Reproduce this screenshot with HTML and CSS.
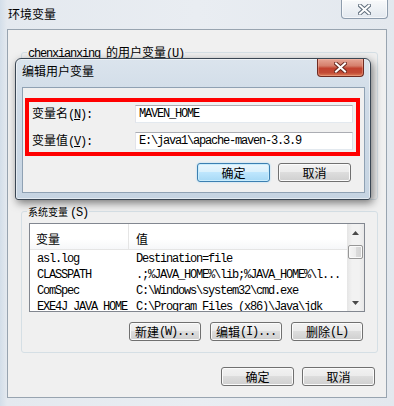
FILE: index.html
```html
<!DOCTYPE html>
<html lang="zh-CN">
<head>
<meta charset="utf-8">
<title>环境变量</title>
<link rel="stylesheet" href="styles.css">
</head>
<body>
<div class="win">
  <div class="win-title">
    <span class="win-caption">环境变量</span>
    <div class="win-close">
      <svg width="13" height="11" viewBox="0 0 13 11"><path d="M2 1.5 L11 9.5 M11 1.5 L2 9.5" stroke="#5f6d7c" stroke-width="4" stroke-linecap="square"/><path d="M2 1.5 L11 9.5 M11 1.5 L2 9.5" stroke="#ffffff" stroke-width="2" stroke-linecap="square"/></svg>
    </div>
  </div>
  <div class="win-client">
    <div class="group group-user">
      <div class="gtitle"><span class="m">chenxianxing </span>的用户变量<span class="m">(U)</span></div>
    </div>
    <div class="group group-sys">
      <div class="gtitle sys"><span class="sys-cjk">系统变量</span><span class="m sys-key">(S)</span></div>
      <div class="listbox sys-list">
        <div class="lv">
          <div class="lv-head"><div class="c1">变量</div><div class="c2">值</div></div>
          <div class="lv-rows">
            <div class="row"><span class="c1 m">asl.log</span><span class="c2 m">Destination=file</span></div>
            <div class="row"><span class="c1 m">CLASSPATH</span><span class="c2 m">.;%JAVA_HOME%\lib;%JAVA_HOME%\l...</span></div>
            <div class="row"><span class="c1 m">ComSpec</span><span class="c2 m">C:\Windows\system32\cmd.exe</span></div>
            <div class="row"><span class="c1 m">EXE4J_JAVA_HOME</span><span class="c2 m">C:\Program Files (x86)\Java\jdk</span></div>
          </div>
        </div>
        <div class="vscroll">
          <div class="sb-btn"><svg width="7" height="4" viewBox="0 0 7 4"><path d="M0 4 L3.5 0 L7 4 Z" fill="#4a4a4a"/></svg></div>
          <div class="sb-thumb"></div>
          <div class="sb-track"></div>
          <div class="sb-btn"><svg width="7" height="4" viewBox="0 0 7 4"><path d="M0 0 L7 0 L3.5 4 Z" fill="#4a4a4a"/></svg></div>
        </div>
      </div>
      <div class="btnrow grp-btns">
        <button class="btn">新建<span class="m">(W)...</span></button>
        <button class="btn">编辑<span class="m">(I)...</span></button>
        <button class="btn">删除<span class="m">(L)</span></button>
      </div>
    </div>
    <div class="btnrow main-btns">
      <button class="btn wide">确定</button>
      <button class="btn wide">取消</button>
    </div>
  </div>

  <div class="dlg">
    <div class="dlg-title">
      <span class="dlg-caption">编辑用户变量</span>
      <div class="dlg-close">
        <svg width="13" height="11" viewBox="0 0 13 11"><path d="M2 1.5 L11 9.5 M11 1.5 L2 9.5" stroke="#6a2a20" stroke-width="4" stroke-linecap="square"/><path d="M2 1.5 L11 9.5 M11 1.5 L2 9.5" stroke="#ffffff" stroke-width="2" stroke-linecap="square"/></svg>
      </div>
    </div>
    <div class="dlg-client">
      <div class="redbox">
        <label class="lbl">变量名<span class="m">(<u>N</u>):</span></label>
        <div class="inp m">MAVEN_HOME</div>
        <label class="lbl">变量值<span class="m">(<u>V</u>):</span></label>
        <div class="inp m">E:\java1\apache-maven-3.3.9</div>
      </div>
      <div class="btnrow dlg-btns">
        <button class="btn wide default">确定</button>
        <button class="btn wide">取消</button>
      </div>
    </div>
  </div>
</div>
</body>
</html>
```
FILE: styles.css
```css
* { box-sizing: border-box; }
html, body { margin: 0; padding: 0; }
body {
  width: 394px;
  height: 406px;
  overflow: hidden;
  font-family: "Noto Sans CJK SC", sans-serif;
  font-size: 12px;
  line-height: 12px;
  color: #000;
  background: #e4e9ef;
}
.m {
  font-family: "Liberation Mono", "Noto Sans CJK SC", monospace;
  letter-spacing: -1.2px;
}
u { text-underline-offset: 1px; }

/* outer window */
.win {
  position: relative;
  width: 394px;
  height: 406px;
  display: flex;
  flex-direction: column;
  background: linear-gradient(90deg, #d3dee9 0, #e4e9ef 7px, #e9edf2 50%, #e3e8ee 100%);
}
.win-title {
  height: 29px;
  display: flex;
  align-items: flex-start;
}
.win-caption { margin: 8px 0 0 8px; }
.win-close {
  margin-left: auto;
  margin-right: 6px;
  width: 47px;
  height: 19px;
  border: 1px solid #8d9cad;
  border-top: none;
  border-radius: 0 0 4px 4px;
  background: linear-gradient(rgba(255,255,255,0.75), rgba(226,232,239,0.8));
  box-shadow: inset 0 0 0 1px rgba(255,255,255,0.6);
  display: flex;
  align-items: center;
  justify-content: center;
}
.win-client {
  margin-left: 7px;
  width: 380px;
  height: 369px;
  border: 1px solid #98a4b0;
  background: #f0f0f0;
  display: flex;
  flex-direction: column;
}

/* group boxes */
.group {
  border: 1px solid #d5dfe5;
  border-radius: 3px;
  margin: 0 8px 0 13px;
  display: flex;
  flex-direction: column;
}
.group-user { margin-top: 22px; height: 148px; }
.group-sys { margin-top: 11px; height: 142px; }
.gtitle {
  align-self: flex-start;
  margin: -7px 0 0 5px;
  padding: 0 1px;
  background: #f0f0f0;
  height: 12px;
  white-space: nowrap;
}
.sys-cjk { font-size: 10px; }
.sys-key { margin-left: 2px; }

/* list view */
.listbox {
  display: flex;
  border: 1px solid #828790;
  background: #fff;
  margin: 6px 12px 0 7px;
  height: 89px;
}
.lv {
  flex: 1;
  display: flex;
  flex-direction: column;
  overflow: hidden;
}
.lv-head {
  height: 26px;
  flex: none;
  display: flex;
  border-bottom: 1px solid #e5e5e5;
  background: linear-gradient(#ffffff 0, #ffffff 60%, #f6f7f9 100%);
}
.lv-head .c1 {
  width: 99px;
  padding: 9px 0 0 6px;
  border-right: 1px solid #e5e5e5;
}
.lv-head .c2 { padding: 9px 0 0 7px; }
.lv-rows { padding-top: 1px; }
.row {
  height: 16px;
  line-height: 16px;
  display: flex;
  white-space: nowrap;
}
.row .c1 { width: 99px; padding-left: 7px; flex: none; }
.row .c2 { padding-left: 7px; }

.vscroll {
  width: 17px;
  flex: none;
  display: flex;
  flex-direction: column;
  background: linear-gradient(90deg, #e5e5e5 0, #f2f2f2 30%, #f2f2f2 70%, #e8e8e8 100%);
}
.sb-btn {
  height: 17px;
  display: flex;
  align-items: center;
  justify-content: center;
}
.sb-thumb {
  margin: 4px 1px 0;
  height: 14px;
  border: 1px solid #979797;
  border-radius: 2px;
  background: linear-gradient(90deg, #f5f5f5 0, #ececec 50%, #dcdcdc 51%, #d2d2d2 100%);
  box-shadow: inset 0 0 0 1px #fafafa;
}
.sb-track { flex: 1; }

/* buttons */
.btnrow {
  display: flex;
  justify-content: flex-end;
}
.grp-btns { margin: 10px 14px 0 0; gap: 9px; }
.main-btns { margin: 14px 11px 0 0; gap: 8px; }
.btn {
  width: 72px;
  height: 19px;
  padding: 0;
  margin: 0;
  font: inherit;
  color: #000;
  border: 1px solid #707070;
  border-radius: 3px;
  background: linear-gradient(#f2f2f2 0, #ebebeb 50%, #dddddd 50%, #cfcfcf 100%);
  box-shadow: inset 0 0 0 1px #fbfbfb;
  display: flex;
  align-items: center;
  justify-content: center;
  white-space: nowrap;
}
.btn.wide { width: 73px; }
.btn.default {
  border-color: #3c7fb1;
  background: linear-gradient(#eaf6fd 0, #d9f0fc 50%, #bee6fd 50%, #a7d9f5 100%);
  box-shadow: inset 0 0 0 1px #c9ecfc, 0 0 2px #9fd8f7;
}

/* edit dialog (overlay) */
.dlg {
  position: absolute;
  left: 15px;
  top: 58px;
  width: 356px;
  height: 142px;
  border: 1px solid #3a4653;
  border-radius: 6px 6px 3px 3px;
  background: linear-gradient(#dbe4ed 0, #cfdbe7 30%, #c6d4e2 100%);
  box-shadow: 2px 3px 8px rgba(0,0,0,0.5), inset 0 0 0 1px rgba(255,255,255,0.5);
  display: flex;
  flex-direction: column;
}
.dlg-title {
  height: 28px;
  flex: none;
  display: flex;
  align-items: flex-start;
}
.dlg-caption { margin: 6px 0 0 6px; }
.dlg-close {
  margin-left: auto;
  margin-right: 6px;
  width: 47px;
  height: 18px;
  border: 1px solid #6e2b22;
  border-top: none;
  border-radius: 0 0 4px 4px;
  background: linear-gradient(#e6a595 0, #d57f6c 40%, #c2422f 55%, #c24a35 80%, #dc7c57 100%);
  box-shadow: inset 0 0 0 1px rgba(255,200,180,0.35);
  display: flex;
  align-items: center;
  justify-content: center;
}
.dlg-client {
  margin: 0 5px 0 6px;
  height: 106px;
  border: 1px solid #8fa1b3;
  background: #f0f0f0;
}
.redbox {
  margin: 10px 0 0 2px;
  width: 335px;
  height: 58px;
  border: 4px solid #ff0000;
  padding-top: 3px;
  display: grid;
  grid-template-columns: 106px 218px;
  grid-auto-rows: 18px;
  row-gap: 9px;
  align-items: center;
}
.lbl { padding-left: 3px; white-space: nowrap; }
.inp {
  height: 18px;
  border: 1px solid;
  border-color: #abadb3 #dbdfe6 #e3e9ef #e2e3ea;
  background: #fff;
  padding-left: 3px;
  display: flex;
  align-items: center;
  white-space: nowrap;
  overflow: hidden;
}
.dlg-btns { margin: 7px 13px 0 0; gap: 8px; }
```
